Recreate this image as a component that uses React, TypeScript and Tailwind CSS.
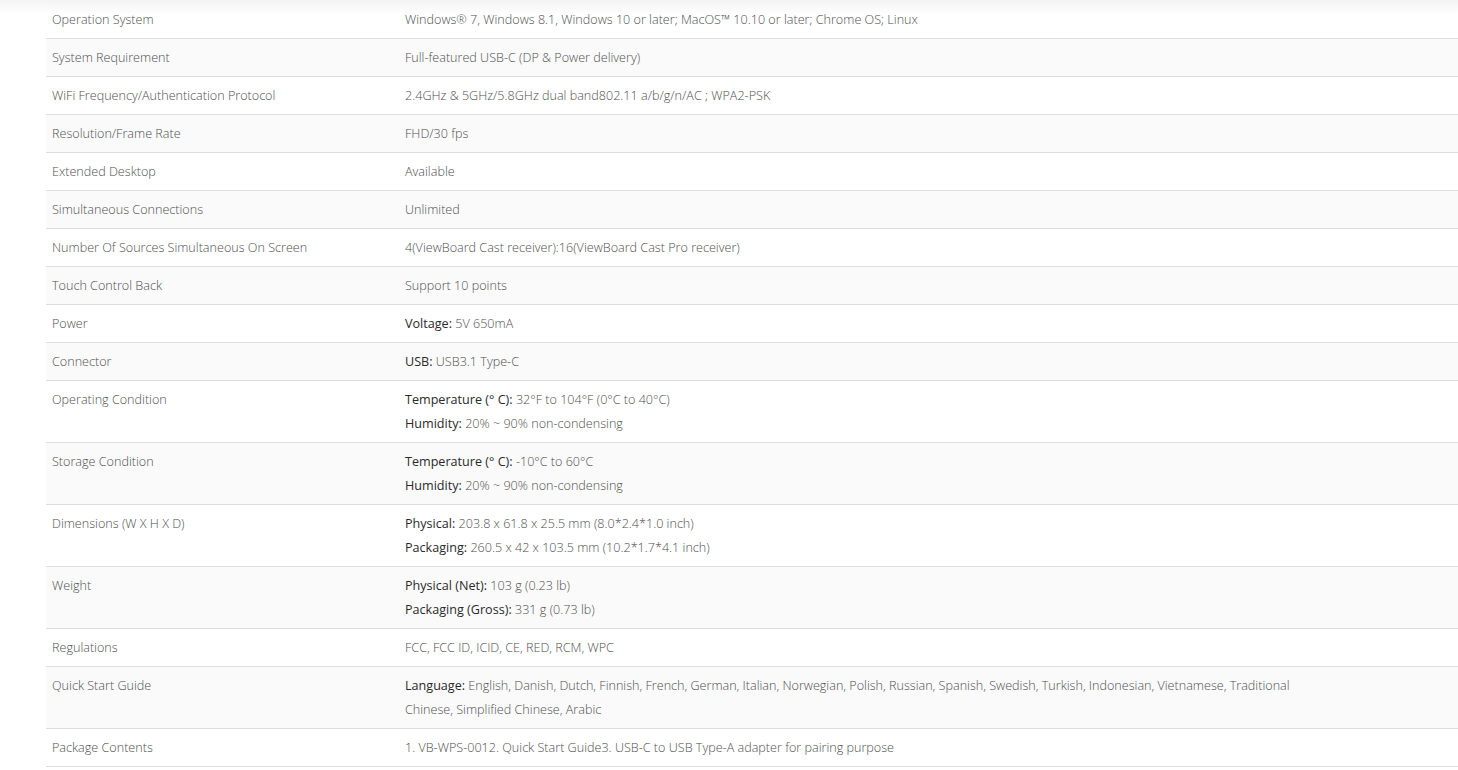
type Line = { label?: string; text: string };
type Spec = { name: string; lines: Line[] };

const specs: Spec[] = [
  { name: 'Operation System', lines: [{ text: 'Windows® 7, Windows 8.1, Windows 10 or later; MacOS™ 10.10 or later; Chrome OS; Linux' }] },
  { name: 'System Requirement', lines: [{ text: 'Full-featured USB-C (DP & Power delivery)' }] },
  { name: 'WiFi Frequency/Authentication Protocol', lines: [{ text: '2.4GHz & 5GHz/5.8GHz dual band802.11 a/b/g/n/AC ; WPA2-PSK' }] },
  { name: 'Resolution/Frame Rate', lines: [{ text: 'FHD/30 fps' }] },
  { name: 'Extended Desktop', lines: [{ text: 'Available' }] },
  { name: 'Simultaneous Connections', lines: [{ text: 'Unlimited' }] },
  { name: 'Number Of Sources Simultaneous On Screen', lines: [{ text: '4(ViewBoard Cast receiver):16(ViewBoard Cast Pro receiver)' }] },
  { name: 'Touch Control Back', lines: [{ text: 'Support 10 points' }] },
  { name: 'Power', lines: [{ label: 'Voltage:', text: '5V 650mA' }] },
  { name: 'Connector', lines: [{ label: 'USB:', text: 'USB3.1 Type-C' }] },
  {
    name: 'Operating Condition',
    lines: [
      { label: 'Temperature (° C):', text: '32°F to 104°F (0°C to 40°C)' },
      { label: 'Humidity:', text: '20% ~ 90% non-condensing' },
    ],
  },
  {
    name: 'Storage Condition',
    lines: [
      { label: 'Temperature (° C):', text: '-10°C to 60°C' },
      { label: 'Humidity:', text: '20% ~ 90% non-condensing' },
    ],
  },
  {
    name: 'Dimensions (W X H X D)',
    lines: [
      { label: 'Physical:', text: '203.8 x 61.8 x 25.5 mm (8.0*2.4*1.0 inch)' },
      { label: 'Packaging:', text: '260.5 x 42 x 103.5 mm (10.2*1.7*4.1 inch)' },
    ],
  },
  {
    name: 'Weight',
    lines: [
      { label: 'Physical (Net):', text: '103 g (0.23 lb)' },
      { label: 'Packaging (Gross):', text: '331 g (0.73 lb)' },
    ],
  },
  { name: 'Regulations', lines: [{ text: 'FCC, FCC ID, ICID, CE, RED, RCM, WPC' }] },
  {
    name: 'Quick Start Guide',
    lines: [
      {
        label: 'Language:',
        text: 'English, Danish, Dutch, Finnish, French, German, Italian, Norwegian, Polish, Russian, Spanish, Swedish, Turkish, Indonesian, Vietnamese, Traditional Chinese, Simplified Chinese, Arabic',
      },
    ],
  },
  { name: 'Package Contents', lines: [{ text: '1. VB-WPS-0012. Quick Start Guide3. USB-C to USB Type-A adapter for pairing purpose' }] },
];

function SpecRow({ spec, index }: { spec: Spec; index: number }) {
  const shaded = index % 2 === 1;
  return (
    <div
      className={
        'flex border-b border-[#dddddd] ' +
        (index === 0
          ? 'bg-[linear-gradient(to_bottom,#f4f4f4,#ffffff_14px)]'
          : shaded
            ? 'bg-[#fafafa]'
            : 'bg-white')
      }
    >
      <div className="w-[353px] shrink-0 pl-[6px] pt-[7px] pb-[6px]">{spec.name}</div>
      <div className="w-[910px] pl-[6px] pt-[7px] pb-[6px]">
        {spec.lines.map((l, i) => (
          <div key={i}>
            {l.label && <span className="font-normal text-[#2a2a2a]">{l.label} </span>}
            {l.text}
          </div>
        ))}
      </div>
    </div>
  );
}

export default function App() {
  return (
    <div className="h-[770px] w-full overflow-hidden bg-[linear-gradient(to_bottom,#f4f4f4,#ffffff_14px)] pt-px font-['Open_Sans',sans-serif] text-[12.6px] leading-[24px] font-light text-[#505050]">
      <div className="ml-[46px] w-[1440px]">
        {specs.map((s, i) => (
          <SpecRow key={s.name} spec={s} index={i} />
        ))}
      </div>
    </div>
  );
}
